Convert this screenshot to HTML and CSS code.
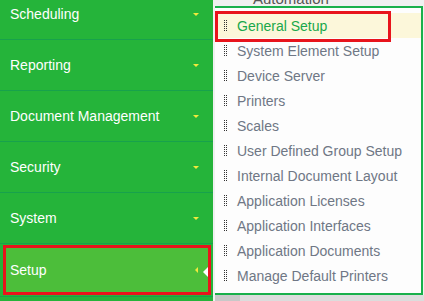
FILE: index.html
```html
<!DOCTYPE html>
<html lang="en">
<head>
    <meta charset="UTF-8">
    <title>Setup</title>
    <link rel="stylesheet" href="styles.css">
</head>
<body>
<div class="app">
    <nav class="sidebar">
        <ul class="nav">
            <li class="nav-item"><span>Scheduling</span><span class="caret caret-down"></span></li>
            <li class="nav-item"><span>Reporting</span><span class="caret caret-down"></span></li>
            <li class="nav-item"><span>Document Management</span><span class="caret caret-down"></span></li>
            <li class="nav-item"><span>Security</span><span class="caret caret-down"></span></li>
            <li class="nav-item"><span>System</span><span class="caret caret-down"></span></li>
            <li class="nav-item active">
                <div class="nav-link"><span>Setup</span><span class="caret caret-left"></span></div>
            </li>
        </ul>
    </nav>
    <main class="content">
        <div class="content-title">Automation</div>
        <div class="content-body"></div>
        <div class="content-foot"><span class="foot-cell"></span></div>
    </main>
    <ul class="submenu">
        <li class="sub-item selected"><span class="grip"></span>General Setup</li>
        <li class="sub-item"><span class="grip"></span>System Element Setup</li>
        <li class="sub-item"><span class="grip"></span>Device Server</li>
        <li class="sub-item"><span class="grip"></span>Printers</li>
        <li class="sub-item"><span class="grip"></span>Scales</li>
        <li class="sub-item"><span class="grip"></span>User Defined Group Setup</li>
        <li class="sub-item"><span class="grip"></span>Internal Document Layout</li>
        <li class="sub-item"><span class="grip"></span>Application Licenses</li>
        <li class="sub-item"><span class="grip"></span>Application Interfaces</li>
        <li class="sub-item"><span class="grip"></span>Application Documents</li>
        <li class="sub-item"><span class="grip"></span>Manage Default Printers</li>
        <li class="mark"></li>
    </ul>
</div>
</body>
</html>
```
FILE: styles.css
```css
html, body {
    margin: 0;
    padding: 0;
    height: 100%;
    overflow: hidden;
}

body {
    font-family: "Liberation Sans", Arial, sans-serif;
    font-size: 14px;
    background: #f0f0f0;
}

.app {
    position: relative;
    display: flex;
    height: 301px;
}

.sidebar {
    width: 213px;
    flex: none;
    background: #25b43a;
    overflow: hidden;
}

.nav {
    list-style: none;
    margin: -11px 0 0 0;
    padding: 0;
}

.nav-item {
    position: relative;
    height: 50px;
    border-bottom: 1px solid #17a24c;
    display: flex;
    align-items: center;
    justify-content: space-between;
    padding: 0 14px 0 10px;
    color: #fff;
}

.nav-item.active {
    padding: 1px 2px 1px 3px;
    display: block;
}

.nav-link {
    height: 100%;
    box-sizing: border-box;
    border: 3px solid #e8141c;
    background: #4cbe3a;
    display: flex;
    align-items: center;
    justify-content: space-between;
    padding: 0 10px 0 4px;
}

.nav-item.active::after {
    content: "";
    position: absolute;
    right: 5px;
    top: 23px;
    border-right: 5px solid #fff;
    border-top: 5px solid transparent;
    border-bottom: 5px solid transparent;
}

.caret {
    width: 0;
    height: 0;
}

.caret-down {
    border-top: 3px solid #f2e93c;
    border-left: 3px solid transparent;
    border-right: 3px solid transparent;
}

.caret-left {
    border-right: 3px solid #f2e93c;
    border-top: 3px solid transparent;
    border-bottom: 3px solid transparent;
}

.content {
    flex: 1;
    display: flex;
    flex-direction: column;
    padding-left: 2px;
}

.content-title {
    margin-top: -11px;
    padding-left: 38px;
    line-height: 20px;
    color: #555;
    font-size: 15px;
}

.content-body {
    flex: 1;
}

.content-foot {
    height: 6px;
    background: #dcdcdc;
}

.foot-cell {
    display: block;
    width: 25px;
    height: 100%;
    background: #c8c8c8;
}

.submenu {
    position: absolute;
    left: 215px;
    top: 6px;
    width: 206px;
    margin: 0;
    padding: 5px 0;
    list-style: none;
    background: #fdfdfd;
    border: 2px solid #19b04b;
    border-left: 0;
}

.sub-item {
    height: 25px;
    display: flex;
    align-items: center;
    gap: 10px;
    padding-left: 9px;
    color: #6f7785;
}

.sub-item.selected {
    background: #fcf7da;
    color: #19a84a;
}

.grip {
    width: 3px;
    height: 12px;
    background-image:
        linear-gradient(#333 50%, transparent 50%),
        linear-gradient(#333 50%, transparent 50%);
    background-size: 1px 2px, 1px 2px;
    background-position: 0 0, 2px 0;
    background-repeat: repeat-y;
}

.mark {
    position: absolute;
    left: 0;
    top: 3px;
    width: 176px;
    height: 31px;
    box-sizing: border-box;
    border: 3px solid #e8141c;
}
```
